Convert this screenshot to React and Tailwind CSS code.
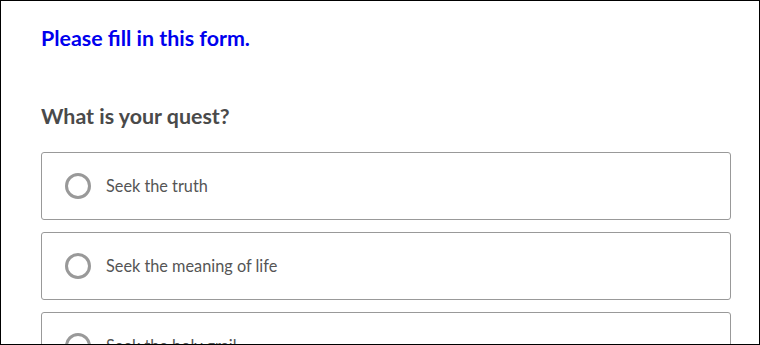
import React from 'react'

const OPTIONS = ['Seek the truth', 'Seek the meaning of life', 'Seek the holy grail']

export default function App() {
  return (
    <div
      className="w-[760px] h-[345px] border border-black overflow-hidden bg-white px-10"
      style={{ fontFamily: 'Lato, "Open Sans", sans-serif' }}
    >
      <h1 className="mt-[24px] text-[21.4px] leading-[26px] font-bold text-[#0000ee]">Please fill in this form.</h1>

      <h2 className="mt-[52px] text-[21.4px] leading-[26px] font-bold text-[#4a4a4a]">What is your quest?</h2>

      <div className="mt-[23px] w-[690px] flex flex-col gap-3">
        {OPTIONS.map(o => (
          <label key={o} className="h-[68px] shrink-0 flex items-center pl-[23px] border border-[#999] rounded-[3px]">
            <span className="w-[26px] h-[26px] rounded-full border-[3px] border-[#999] shrink-0" />
            <span className="ml-[15px] text-[16.3px] text-[#555]">{o}</span>
          </label>
        ))}
      </div>
    </div>
  )
}
